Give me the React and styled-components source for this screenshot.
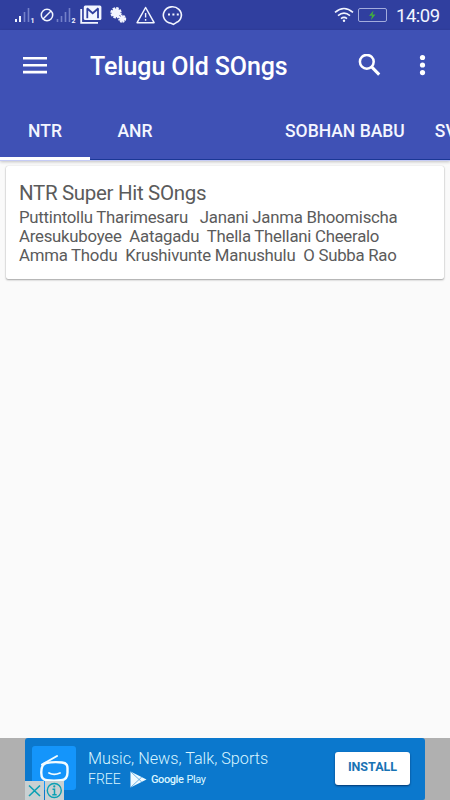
import React, { useState } from 'react'
import styled, { createGlobalStyle } from 'styled-components'

const GlobalStyle = createGlobalStyle`
    * {
        box-sizing: border-box;
    }
    body {
        margin: 0;
        overflow: hidden;
        background: #fafafa;
        font-family: Roboto, 'Liberation Sans', sans-serif;
    }
    button {
        border: 0;
        padding: 0;
        background: none;
        font-family: inherit;
        color: inherit;
    }
    svg {
        display: block;
        flex: none;
    }
`

const Screen = styled.div`
    width: 450px;
    height: 800px;
    display: flex;
    flex-direction: column;
    overflow: hidden;
`

const StatusBar = styled.div`
    height: 30px;
    flex: none;
    display: flex;
    justify-content: space-between;
    background: #303f9f;
    color: #f2f5ff;
`

const Clock = styled.span`
    width: 54px;
    font-size: 18.5px;
    line-height: 32px;
    letter-spacing: -0.5px;
    white-space: nowrap;
`

const StatusGroup = styled.div`
    display: flex;
`

const Header = styled.header`
    flex: none;
    height: 131px;
    background: #3f51b5;
    color: #fff;
    border-bottom: 1px solid #c5cbf5;
    box-shadow: inset 0 -1px 0 #1b3795, 0 1px 3px rgba(0, 0, 0, 0.22);
`

const Toolbar = styled.div`
    height: 72px;
    display: flex;
    align-items: center;
    padding: 0 16px 0 23px;
`

const Title = styled.h1`
    flex: 1;
    margin: 2px 0 0 43px;
    font-size: 25px;
    font-weight: 500;
    line-height: 72px;
    letter-spacing: -0.1px;
    white-space: nowrap;
`

const IconButton = styled.button`
    display: flex;
    margin-left: ${(props) => props.$gap || 0}px;
`

const Tabs = styled.nav`
    display: flex;
    height: 58px;
    overflow: hidden;
`

const Tab = styled.button`
    flex: none;
    min-width: 90px;
    padding: 3px 15px 0;
    font-size: 17.5px;
    font-weight: 500;
    line-height: 52px;
    text-align: ${(props) => props.$align || 'center'};
    white-space: nowrap;
    color: #f4f6ff;
    border-bottom: 3px solid ${(props) => (props.$active ? '#fff' : 'transparent')};
`

const Content = styled.main`
    flex: 1;
    padding: 5px 6px;
`

const Card = styled.section`
    height: 113px;
    padding: 14px 13px;
    background: #fff;
    border-radius: 2px;
    color: #5b5b5b;
    box-shadow: 0 1px 2px rgba(0, 0, 0, 0.34), 0 0 1px rgba(0, 0, 0, 0.2);
`

const CardTitle = styled.h2`
    margin: 0 0 1px;
    font-size: 20.5px;
    font-weight: 400;
    line-height: 27px;
    letter-spacing: -0.32px;
`

const SongLine = styled.p`
    margin: 0;
    font-size: 16.8px;
    line-height: 19px;
    white-space: pre;
    letter-spacing: -0.25px;
`

const AdBar = styled.footer`
    flex: none;
    height: 62px;
    display: flex;
    justify-content: center;
    background: #b0b0b0;
`

const Banner = styled.div`
    position: relative;
    width: 400px;
    display: flex;
    padding: 8px 15px 0 7px;
    border-radius: 3px 3px 2px 2px;
    background: #0b78cd;
    color: #d9f5ff;
`

const AppIcon = styled.div`
    width: 44px;
    height: 44px;
    border-radius: 3px;
    background: #1495fb;
`

const AdText = styled.div`
    flex: 1;
    margin-left: 12px;
`

const AdHeadline = styled.div`
    height: 24px;
    font-size: 16.2px;
    font-weight: 300;
    line-height: 26px;
    white-space: nowrap;
`

const StoreRow = styled.div`
    display: flex;
    align-items: center;
    height: 18px;
    font-size: 14px;
    font-weight: 300;
`

const Price = styled.span`
    width: 42px;
`

const StoreName = styled.span`
    margin-left: ${(props) => (props.$bold ? 4 : 3)}px;
    font-size: 11px;
    font-weight: ${(props) => (props.$bold ? 500 : 400)};
    letter-spacing: -0.4px;
`

const Install = styled.button`
    width: 75px;
    height: 33px;
    margin-top: 6px;
    padding-bottom: 3px;
    border-radius: 3px;
    background: #fff;
    color: #1873b4;
    font-size: 12.5px;
    font-weight: 700;
    line-height: 30px;
    box-shadow: 0 1px 2px rgba(0, 20, 60, 0.65);
`

const AdChoices = styled.div`
    position: absolute;
    left: 0;
    bottom: 0;
    display: flex;
    gap: 1px;
`

const AdChoice = styled.span`
    width: 19px;
    height: 19px;
    background: #c9d0d2;
`

const StatusIcons = () => (
    <svg width="190" height="30" viewBox="0 0 190 30" fill="none" stroke="#f2f5ff">
        <path d="M16 22v-3M20 22v-6" strokeWidth="2" />
        <path d="M24.5 22V12M28.5 22V8" strokeWidth="1.6" stroke="#7480c9" />
        <text x="30.5" y="22.5" fontSize="7" fontWeight="700" fill="#f2f5ff" stroke="none">1</text>
        <circle cx="47" cy="15" r="5.7" strokeWidth="1.5" />
        <path d="M43 19l8-8" strokeWidth="1.5" />
        <path d="M57.5 22v-3M61.5 22v-6M65.5 22V12M69.5 22V8" strokeWidth="1.6" stroke="#7480c9" />
        <text x="71.5" y="22.5" fontSize="7" fontWeight="700" fill="#f2f5ff" stroke="none">2</text>
        <path d="M81.2 9v13.8H98" strokeWidth="1.8" />
        <rect x="83.8" y="5.5" width="17.6" height="14.5" rx="1.5" fill="#f2f5ff" stroke="none" />
        <path d="M87.3 18.3V8.2M98 18.3V8.2M87 8.3l5.7 5 5.7-5" stroke="#303f9f" strokeWidth="1.8" />
        <circle cx="116" cy="12.8" r="4.4" fill="#f2f5ff" strokeWidth="2.6" strokeDasharray="2.4 1" />
        <circle cx="122.2" cy="18.7" r="2.8" fill="#f2f5ff" strokeWidth="2.4" strokeDasharray="1.7 .6" />
        <path d="M145.6 7.5l8.5 15.2h-17z" strokeWidth="1.5" strokeLinejoin="round" />
        <path d="M145.6 13v4.5M145.6 19v1.7" strokeWidth="1.4" />
        <path d="M171 23.3a9 8.3 0 1 1 5.2-.7l-2.8 1.8z" strokeWidth="1.6" />
        <path d="M168 14.5h2M172.4 14.5h2M176.8 14.5h2" strokeWidth="2" />
    </svg>
)

const WifiBattery = () => (
    <svg width="62" height="30" viewBox="334 0 62 30" fill="none" stroke="#f2f5ff">
        <path d="M335 12.3q9-7.6 18 0M338 15.6q6-5 12 0M341 18.7q3-2.5 6 0" strokeWidth="1.6" />
        <circle cx="344" cy="20.8" r="1.2" fill="#f2f5ff" stroke="none" />
        <rect x="358.5" y="8.5" width="28" height="13" rx="1.5" stroke="#a3acdd" />
        <path d="M373.5 10.5l-4.5 5.2h3l-1 4.3 4.5-5.6h-3z" fill="#42ae3e" stroke="none" />
    </svg>
)

const MenuIcon = () => (
    <svg width="24" height="18" viewBox="0 0 24 18" fill="#fff">
        <path d="M0 0h24v2.6H0zM0 6.9h24v2.6H0zM0 13.8h24v2.6H0z" />
    </svg>
)

const SearchIcon = () => (
    <svg width="24" height="24" viewBox="0 0 24 24" fill="none" stroke="#fff">
        <circle cx="8.8" cy="7.8" r="6.9" strokeWidth="2.5" />
        <path d="M13.4 12.6l7.8 8" strokeWidth="3" />
    </svg>
)

const MoreIcon = () => (
    <svg width="24" height="24" viewBox="0 0 24 24" fill="#fff">
        <circle cx="12.5" cy="3.5" r="2.6" />
        <circle cx="12.5" cy="11" r="2.6" />
        <circle cx="12.5" cy="18.6" r="2.6" />
    </svg>
)

const RadioIcon = () => (
    <svg width="44" height="44" viewBox="0 0 44 44" fill="none" stroke="#f2fcff" strokeLinecap="round">
        <path d="M10 18.5L25 10" strokeWidth="2" />
        <path d="M14 17Q22 15.6 30 16.5Q35.5 17 35.5 22V26.5Q35.5 34 29 34.2Q22 35 15 34.2Q9.3 34 9.3 27Q9 18.5 14 17Z" strokeWidth="2.4" />
        <path d="M17 27q5 2.6 11 0" strokeWidth="1.8" />
    </svg>
)

const PlayIcon = () => (
    <svg width="17" height="17" viewBox="0 0 17 17">
        <path d="M.5.5L16.5 8.5.5 16.5z" fill="#effaff" />
        <path d="M1 1l10.8 10M1 16L11.8 6" stroke="#4f9fda" strokeWidth=".8" />
    </svg>
)

const CloseIcon = () => (
    <svg width="19" height="19" viewBox="0 0 19 19" stroke="#0ba0b4" strokeWidth="1.6">
        <path d="M4 4.5l11 10.5M15 4.5L4 15" />
    </svg>
)

const InfoIcon = () => (
    <svg width="19" height="19" viewBox="0 0 19 19" fill="none" stroke="#0ba0b4">
        <circle cx="9.3" cy="9.5" r="7" strokeWidth="1.4" />
        <path d="M7.5 8.2h2v5.5M7.3 13.7h4.4" strokeWidth="1.5" />
        <circle cx="9.3" cy="5.4" r="1.1" fill="#0ba0b4" stroke="none" />
    </svg>
)

const tabs = [
    { label: 'NTR' },
    { label: 'ANR' },
    { label: '' },
    { label: 'SOBHAN BABU' },
    { label: 'SV', align: 'left' },
]

const songs = [
    'Puttintollu Tharimesaru   Janani Janma Bhoomischa',
    'Aresukuboyee  Aatagadu  Thella Thellani Cheeralo',
    'Amma Thodu  Krushivunte Manushulu  O Subba Rao',
]

const App = () => {
    const [active, setActive] = useState(0)

    return (
        <Screen>
            <GlobalStyle />
            <StatusBar>
                <StatusIcons />
                <StatusGroup>
                    <WifiBattery />
                    <Clock>14:09</Clock>
                </StatusGroup>
            </StatusBar>
            <Header>
                <Toolbar>
                    <IconButton aria-label="Menu">
                        <MenuIcon />
                    </IconButton>
                    <Title>Telugu Old SOngs</Title>
                    <IconButton aria-label="Search">
                        <SearchIcon />
                    </IconButton>
                    <IconButton aria-label="More" $gap={28}>
                        <MoreIcon />
                    </IconButton>
                </Toolbar>
                <Tabs>
                    {tabs.map((tab, i) => (
                        <Tab
                            key={i}
                            $active={i === active}
                            $align={tab.align}
                            onClick={() => setActive(i)}
                        >
                            {tab.label}
                        </Tab>
                    ))}
                </Tabs>
            </Header>
            <Content>
                <Card>
                    <CardTitle>NTR Super Hit SOngs</CardTitle>
                    {songs.map((song) => (
                        <SongLine key={song}>{song}</SongLine>
                    ))}
                </Card>
            </Content>
            <AdBar>
                <Banner>
                    <AppIcon>
                        <RadioIcon />
                    </AppIcon>
                    <AdText>
                        <AdHeadline>Music, News, Talk, Sports</AdHeadline>
                        <StoreRow>
                            <Price>FREE</Price>
                            <PlayIcon />
                            <StoreName $bold>Google</StoreName>
                            <StoreName>Play</StoreName>
                        </StoreRow>
                    </AdText>
                    <Install>INSTALL</Install>
                    <AdChoices>
                        <AdChoice>
                            <CloseIcon />
                        </AdChoice>
                        <AdChoice>
                            <InfoIcon />
                        </AdChoice>
                    </AdChoices>
                </Banner>
            </AdBar>
        </Screen>
    )
}

export default App
